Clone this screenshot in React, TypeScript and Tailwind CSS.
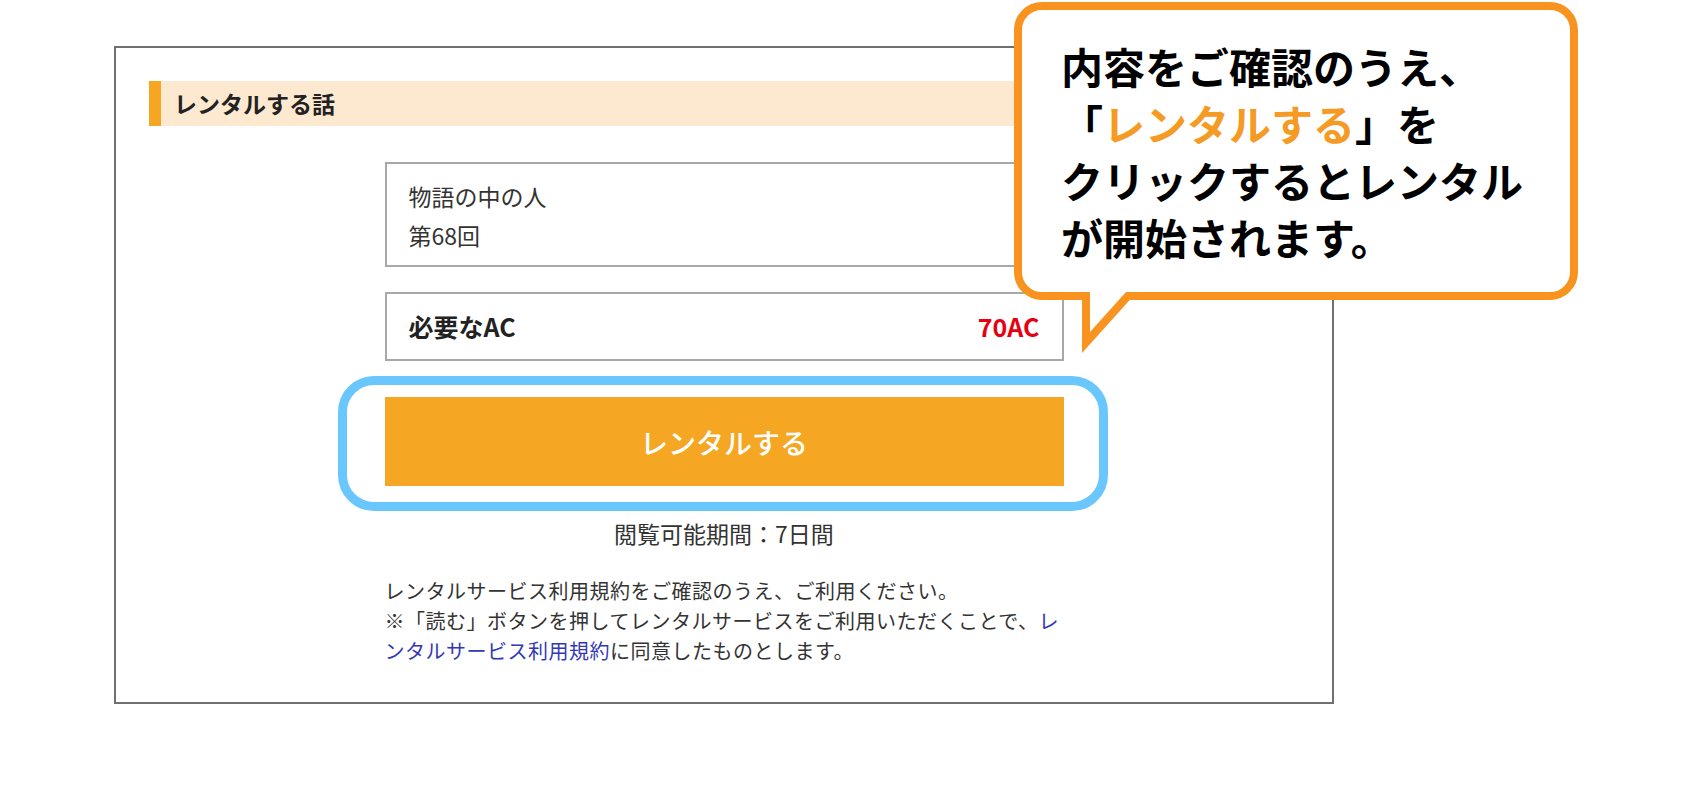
const jp = "font-['Noto_Sans_CJK_JP',sans-serif]";

function Callout() {
  return (
    <>
      <div className="absolute left-[1014px] top-[2px] h-[298px] w-[564px] rounded-[28px] border-[8px] border-[#f7931e] bg-white pl-[39px] pt-[27px]">
        <p className="text-[42px] font-bold leading-[57px] text-black">
          内容をご確認のうえ、
          <br />
          「<span className="text-[#f59a23]">レンタルする</span>」を
          <br />
          クリックするとレンタル
          <br />
          が開始されます。
        </p>
      </div>
      {/* speech tail */}
      <svg
        className="absolute left-[1082px] top-[292px]"
        width="56"
        height="62"
        viewBox="0 0 56 62"
      >
        <polygon points="0,1 0,61 54,1" fill="#f7931e" />
        <polygon points="8,0 8,40 44,0" fill="#ffffff" />
      </svg>
    </>
  );
}

export default function App() {
  return (
    <div className={`relative h-[792px] w-[1692px] overflow-hidden bg-white pl-[114px] pt-[46px] ${jp}`}>
      <div className="h-[658px] w-[1220px] border-2 border-[#707070] px-[33px] pt-[33px]">
        <div className="flex h-[45px] items-center bg-[#fce9d0]">
          <div className="h-full w-[12px] bg-[#f5a623]" />
          <p className="ml-[13px] text-[23px] font-bold text-[#222]">レンタルする話</p>
        </div>

        <div className="mx-auto mt-[36px] w-[679px]">
          <div className="border-2 border-[#a8a8a8] px-[22px] pb-[10px] pt-[13px] text-[23px] leading-[39px] text-[#333]">
            <p>物語の中の人</p>
            <p>第68回</p>
          </div>

          <div className="mt-[25px] flex h-[69px] items-center justify-between border-2 border-[#a8a8a8] px-[22px] text-[25px] font-bold">
            <span className="text-[#222]">必要なAC</span>
            <span className="text-[#e60012]">70AC</span>
          </div>

          <div className="relative mt-[36px]">
            <button className="flex h-[89px] w-full items-center justify-center bg-[#f5a623] text-[28px] font-medium text-white">
              レンタルする
            </button>
            <span className="pointer-events-none absolute -bottom-[25px] -left-[47px] -right-[44px] -top-[21px] rounded-[36px] border-[9px] border-[#6ac7fd]" />
          </div>

          <p className="mt-[30px] text-center text-[23px] leading-[34px] text-[#333]">閲覧可能期間：7日間</p>

          <p className="mt-[26px] text-[20px] leading-[30px] tracking-[0.5px] text-[#333]">
            レンタルサービス利用規約をご確認のうえ、ご利用ください。
            <br />
            ※「読む」ボタンを押してレンタルサービスをご利用いただくことで、
            <span className="text-[#3339b5]">レンタルサービス利用規約</span>に同意したものとします。
          </p>
        </div>
      </div>

      <Callout />
    </div>
  );
}
